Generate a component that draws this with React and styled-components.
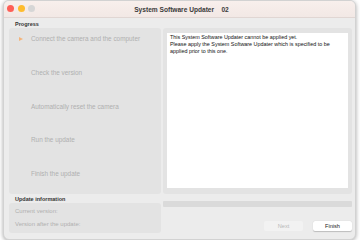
import React from 'react'
import styled, { createGlobalStyle } from 'styled-components'

const steps = [
  { label: 'Connect the camera and the computer', active: true },
  { label: 'Check the version' },
  { label: 'Automatically reset the camera' },
  { label: 'Run the update' },
  { label: 'Finish the update' },
]

export default function App() {
  return (
    <>
      <Global />
      <Window>
        <TitleBar>
          <Lights>
            <Light color="#fe5f57" />
            <Light color="#febc2e" />
            <Light color="#d6d6d6" />
          </Lights>
          <Title>System Software Updater&nbsp;&nbsp;&nbsp;&nbsp;02</Title>
        </TitleBar>
        <Body>
          <SectionLabel>Progress</SectionLabel>
          <Main>
            <StepPanel>
              {steps.map((s) => (
                <Step key={s.label}>
                  <Marker>{s.active ? <Arrow /> : null}</Marker>
                  {s.label}
                </Step>
              ))}
            </StepPanel>
            <MessagePanel>
              <MessageBox>
                This System Software Updater cannot be applied yet.
                <br />
                Please apply the System Software Updater which is specified to be
                applied prior to this one.
              </MessageBox>
            </MessagePanel>
          </Main>
          <Bottom>
            <InfoCol>
              <SectionLabel>Update information</SectionLabel>
              <InfoBox>
                <InfoLine>Current version:</InfoLine>
                <InfoLine>Version after the update:</InfoLine>
              </InfoBox>
            </InfoCol>
            <ActionCol>
              <ProgressBar />
              <Buttons>
                <Button disabled>Next</Button>
                <Button>Finish</Button>
              </Buttons>
            </ActionCol>
          </Bottom>
        </Body>
      </Window>
    </>
  )
}

const Global = createGlobalStyle`
  html, body { margin: 0; padding: 0; background: #ffffff; }
  body { font-family: "Liberation Sans", Arial, sans-serif; }
`

const Window = styled.div`
  margin: 0 4px 0 3px;
  width: 353px;
  height: 240px;
  border-radius: 6px;
  background: #ececec;
  box-shadow: 0 1px 4px rgba(0, 0, 0, 0.35);
  display: flex;
  flex-direction: column;
  overflow: hidden;
  box-sizing: border-box;
  border: 1px solid #d2d2d2;
`

const TitleBar = styled.div`
  height: 16px;
  flex: none;
  position: relative;
  display: flex;
  align-items: center;
  justify-content: center;
  background: linear-gradient(#f8efec, #f2e8e5);
  border-bottom: 1px solid #e0d6d3;
`

const Lights = styled.div`
  position: absolute;
  left: 3px;
  top: 4px;
  display: flex;
  gap: 3.5px;
`

const Light = styled.span`
  width: 7px;
  height: 7px;
  border-radius: 50%;
  background: ${(p) => p.color};
`

const Title = styled.div`
  font-size: 6.6px;
  font-weight: bold;
  color: #3a3a3a;
  margin-left: 4px;
`

const Body = styled.div`
  flex: 1;
  display: flex;
  flex-direction: column;
  padding: 2px 3px 5px 5px;
`

const SectionLabel = styled.div`
  font-size: 5.5px;
  font-weight: bold;
  color: #333;
  padding-left: 6px;
  height: 8px;
  line-height: 8px;
`

const Main = styled.div`
  display: flex;
  gap: 2px;
  height: 166px;
`

const StepPanel = styled.div`
  width: 152px;
  background: #e3e3e3;
  border-radius: 3px;
  display: flex;
  flex-direction: column;
  padding-top: 7px;
  box-sizing: border-box;
  overflow: hidden;
`

const Step = styled.div`
  height: 33.75px;
  flex: none;
  display: flex;
  align-items: flex-start;
  font-size: 6.4px;
  color: #b0b0b0;
  line-height: 8px;
`

const Marker = styled.span`
  width: 22px;
  display: flex;
  justify-content: center;
  padding-left: 2px;
  padding-top: 1.5px;
  box-sizing: border-box;
`

const Arrow = styled.span`
  width: 0;
  height: 0;
  border-top: 2.5px solid transparent;
  border-bottom: 2.5px solid transparent;
  border-left: 4px solid #f5b47a;
`

const MessagePanel = styled.div`
  flex: 1;
  background: #e3e3e3;
  border-radius: 3px;
  padding: 5px 4px 6px 4px;
  display: flex;
`

const MessageBox = styled.div`
  flex: 1;
  background: #ffffff;
  font-size: 5.4px;
  line-height: 7px;
  color: #111;
  padding: 1px 3px;
`

const Bottom = styled.div`
  display: flex;
  gap: 2px;
  margin-top: 1px;
`

const InfoCol = styled.div`
  width: 152px;
  display: flex;
  flex-direction: column;
`

const InfoBox = styled.div`
  background: #e3e3e3;
  border-radius: 3px;
  height: 30px;
  padding: 5px 0 0 6px;
  box-sizing: border-box;
  display: flex;
  flex-direction: column;
  gap: 6px;
`

const InfoLine = styled.div`
  font-size: 6px;
  color: #b0b0b0;
  line-height: 7px;
`

const ActionCol = styled.div`
  flex: 1;
  display: flex;
  flex-direction: column;
  padding-top: 6px;
`

const ProgressBar = styled.div`
  height: 6px;
  background: #dadada;
  border-radius: 1px;
`

const Buttons = styled.div`
  display: flex;
  justify-content: flex-end;
  gap: 10px;
  margin-top: 14px;
`

const Button = styled.button`
  width: 39px;
  height: 10px;
  padding: 0;
  border: none;
  border-radius: 2px;
  font-family: inherit;
  font-size: 5.6px;
  background: ${(p) => (p.disabled ? '#f2f2f2' : '#ffffff')};
  color: ${(p) => (p.disabled ? '#b8b8b8' : '#222')};
  box-shadow: ${(p) => (p.disabled ? 'none' : '0 0.5px 1px rgba(0,0,0,0.2)')};
`
